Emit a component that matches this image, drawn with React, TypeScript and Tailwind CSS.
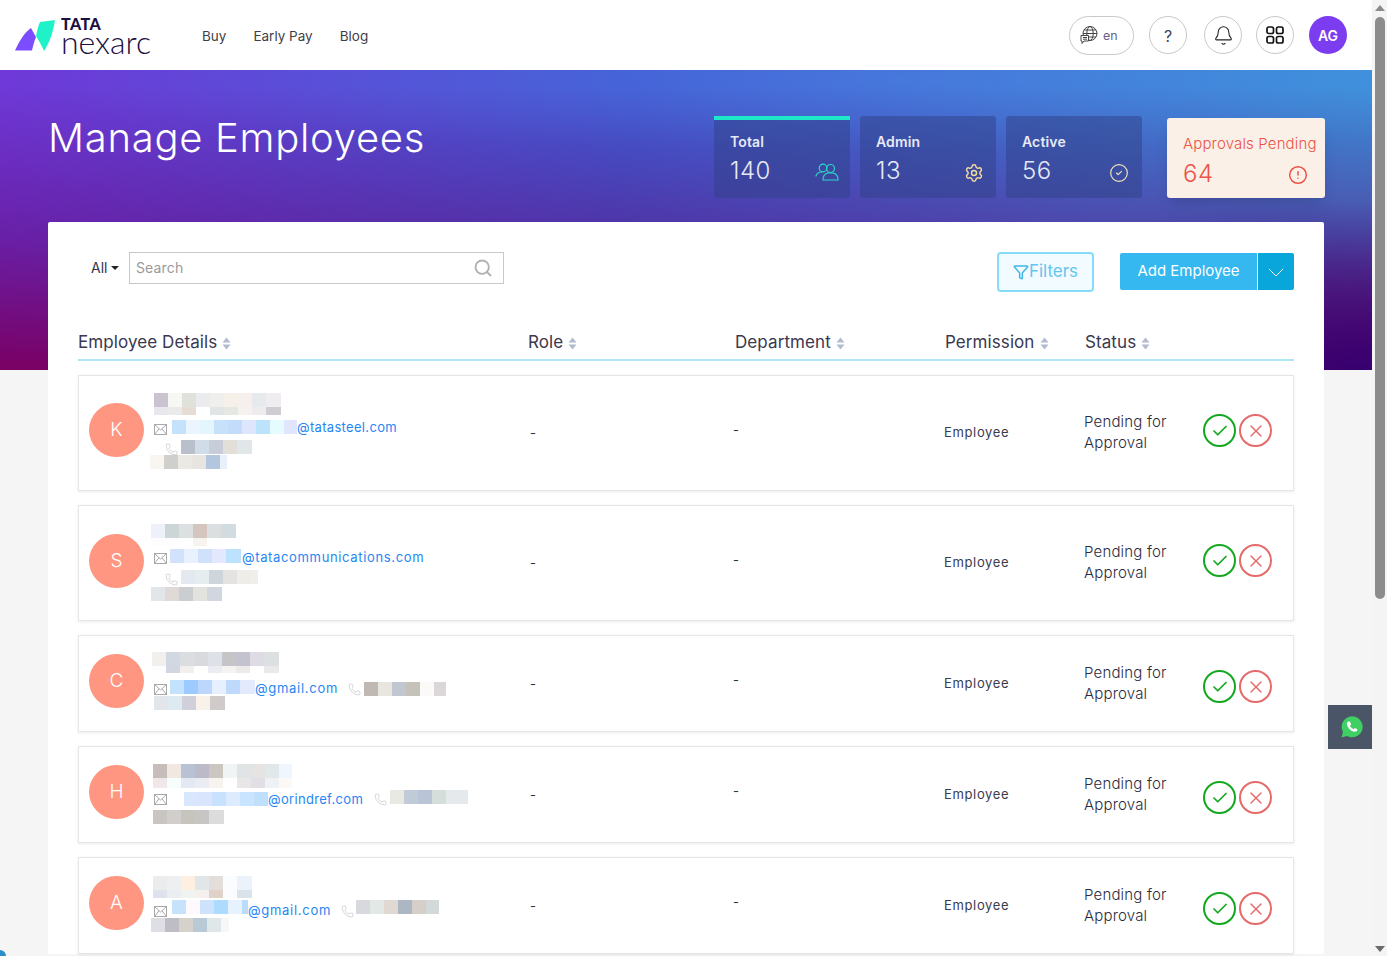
import type { ReactNode } from 'react'
import { Bell, CircleAlert, CircleCheck, Check, Funnel, Phone, Search, Settings, X } from 'lucide-react'

function Mosaic({ cells, className = '' }: { cells: string[]; className?: string }) {
  return (
    <div className={`flex overflow-hidden ${className}`}>
      {cells.map((c, i) => (
        <div key={i} className={`w-[14px] shrink-0 h-full ${c}`} />
      ))}
    </div>
  )
}

function MailIcon({ className = '' }: { className?: string }) {
  return (
    <svg width="13" height="11" viewBox="0 0 13 11" fill="none" stroke="#a9a9a9" strokeWidth="1" className={`shrink-0 ${className}`}>
      <rect x="0.5" y="0.5" width="12" height="10" />
      <path d="M0.5 0.5 6.5 6l6-5.500M0.5 10.500 5 4.800M12.500 10.500 8 4.800" />
    </svg>
  )
}

function PhoneIcon({ className = '' }: { className?: string }) {
  return <Phone size={13} strokeWidth={1} className={`shrink-0 text-[#b5b5b5] ${className}`} />
}

function Domain({ children, className = 'tracking-[0.025em]' }: { children: ReactNode; className?: string }) {
  return <span className={`text-[13px] leading-[14px] text-[#1f86f5] whitespace-nowrap ${className}`}>{children}</span>
}

function SortIcon() {
  return (
    <svg width="9" height="13" viewBox="0 0 9 13" fill="#b3bccf" className="ml-[5px] mt-[2px] shrink-0">
      <path d="M4.500 0.500 8.500 5.500H0.500zM4.500 12.500 0.500 7.500H8.500z" />
    </svg>
  )
}

const employees: { letter: string; height: string; avatar: string; actions: string; details: ReactNode }[] = [
  {
    letter: 'K',
    height: 'h-[116px]',
    avatar: 'mt-[27px]',
    actions: 'mt-[-5px]',
    details: (
      <div className="pt-[17px]">
        <Mosaic className="ml-[4px] w-[127px] h-[14px]" cells={['bg-[#c9c4d0]', 'bg-[#f7f7f3]', 'bg-[#e0e1da]', 'bg-[#eaebec]', 'bg-[#eff0eb]', 'bg-[#f5f1e9]', 'bg-[#f5f0ed]', 'bg-[#e6eaec]', 'bg-[#efedf0]', 'bg-[#efedf0]']} />
        <Mosaic className="ml-[4px] w-[127px] h-[8px]" cells={['bg-[#e8e7ee]', 'bg-[#e9eaea]', 'bg-[#e6dcd3]', 'bg-white', 'bg-[#e0e5e6]', 'bg-[#e6e9e3]', 'bg-[#f5f1ef]', 'bg-[#f0ebec]', 'bg-[#cfcdd2]', 'bg-[#cfcdd2]']} />
        <div className="ml-[4px] mt-[5px] h-[14px] flex items-center">
          <MailIcon className="translate-y-[2px]" />
          <Mosaic className="ml-[5px] w-[125px] h-[14px]" cells={['bg-[#c5e2fd]', 'bg-[#ebf5fe]', 'bg-[#e3f6fe]', 'bg-[#c8e1fb]', 'bg-[#c3dcfb]', 'bg-[#dde6fd]', 'bg-[#bde2fc]', 'bg-[#e6fbfe]', 'bg-[#e0e6fd]']} />
          <Domain>@tatasteel.com</Domain>
        </div>
        <div className="ml-[15px] mt-[6px] h-[14px] flex items-center">
          <PhoneIcon className="translate-y-[2px]" />
          <Mosaic className="ml-[3px] w-[71px] h-[14px]" cells={['bg-[#babfcc]', 'bg-[#d0dde9]', 'bg-[#c8cdd9]', 'bg-[#e2dfd8]', 'bg-[#e1e6e9]', 'bg-[#e1e6e9]']} />
        </div>
        <Mosaic className="mt-px w-[77px] h-[14px]" cells={['bg-[#f9f5f1]', 'bg-[#cfcfce]', 'bg-[#ebe9e3]', 'bg-[#e8e4e0]', 'bg-[#b4c6dd]', 'bg-[#e8f1f9]']} />
      </div>
    ),
  },
  {
    letter: 'S',
    height: 'h-[116px]',
    avatar: 'mt-[28px]',
    actions: 'mt-[-5px]',
    details: (
      <div className="pt-[18px]">
        <Mosaic className="ml-px w-[85px] h-[14px]" cells={['bg-[#eef1f9]', 'bg-[#cdd6d6]', 'bg-[#dde0e1]', 'bg-[#d5c5bf]', 'bg-[#dcdfdf]', 'bg-[#d1dbe0]', 'bg-[#d1dbe0]']} />
        <Mosaic className="ml-px w-[85px] h-[8px]" cells={['bg-[#fdfdfd]', 'bg-[#fdfdfd]', 'bg-white', 'bg-[#f7f4ef]', 'bg-white', 'bg-white', 'bg-white']} />
        <div className="ml-[4px] mt-[3px] h-[14px] flex items-center">
          <MailIcon className="translate-y-[2px]" />
          <Mosaic className="ml-[3px] w-[71px] h-[14px]" cells={['bg-[#d2e2fd]', 'bg-[#e8f1fe]', 'bg-[#d1e1fc]', 'bg-[#e2e8fd]', 'bg-[#bde2fd]', 'bg-[#bde2fd]']} />
          <Domain className="ml-px translate-y-px tracking-[0.05em]">@tatacommunications.com</Domain>
        </div>
        <div className="ml-[15px] mt-[7px] h-[14px] flex items-center">
          <PhoneIcon className="translate-y-[2px]" />
          <Mosaic className="ml-[3px] w-[77px] h-[14px]" cells={['bg-[#e3e9ef]', 'bg-[#e6edee]', 'bg-[#ced6dc]', 'bg-[#e4e3e1]', 'bg-[#eeede8]', 'bg-[#f0efeb]']} />
        </div>
        <Mosaic className="ml-px mt-[3px] w-[71px] h-[14px]" cells={['bg-[#e3e6e8]', 'bg-[#dfdad7]', 'bg-[#cbced1]', 'bg-[#e2e3de]', 'bg-[#d2d6de]', 'bg-[#d2d6de]']} />
      </div>
    ),
  },
  {
    letter: 'C',
    height: 'h-[97px]',
    avatar: 'mt-[18px]',
    actions: 'mt-[6px]',
    details: (
      <div className="pt-[16px]">
        <Mosaic className="ml-[2px] w-[127px] h-[14px]" cells={['bg-[#f1f0ec]', 'bg-[#d2d8e1]', 'bg-[#dcdde1]', 'bg-[#d8dade]', 'bg-[#dfe1e9]', 'bg-[#c5c5c7]', 'bg-[#c2c3ce]', 'bg-[#dedbe5]', 'bg-[#dde0e0]', 'bg-[#dde0e0]']} />
        <Mosaic className="ml-[2px] w-[127px] h-[7px]" cells={['bg-[#fdfdfd]', 'bg-[#d1d6e0]', 'bg-[#f1f0ec]', 'bg-white', 'bg-[#ebecf2]', 'bg-[#f6f4f2]', 'bg-[#eeeaea]', 'bg-white', 'bg-[#e9e9e9]', 'bg-[#e9e9e9]']} />
        <div className="ml-[4px] mt-[7px] h-[14px] flex items-center">
          <MailIcon className="translate-y-[2px]" />
          <Mosaic className="ml-[3px] w-[85px] h-[14px]" cells={['bg-[#c3e2fd]', 'bg-[#9dcbff]', 'bg-[#bdd7fc]', 'bg-[#e6f0fe]', 'bg-[#bed9fc]', 'bg-[#e3eafd]', 'bg-[#e3eafd]']} />
          <Domain className="translate-y-px tracking-[0.055em]">@gmail.com</Domain>
          <PhoneIcon className="ml-[10px] translate-y-[2px]" />
          <Mosaic className="ml-[3px] w-[82px] h-[14px] translate-y-[2px]" cells={['bg-[#c0b9b3]', 'bg-[#e9e6df]', 'bg-[#c1c7d0]', 'bg-[#c5c2b9]', 'bg-[#fcfaf8]', 'bg-[#dbd6d7]']} />
        </div>
        <Mosaic className="ml-[4px] mt-[2px] w-[71px] h-[14px]" cells={['bg-[#e2e5e9]', 'bg-[#deeaf2]', 'bg-[#cfd0da]', 'bg-[#f8f2ea]', 'bg-[#d0cbca]', 'bg-[#d0cbca]']} />
      </div>
    ),
  },
  {
    letter: 'H',
    height: 'h-[97px]',
    avatar: 'mt-[18px]',
    actions: 'mt-[6px]',
    details: (
      <div className="pt-[17px]">
        <Mosaic className="ml-[3px] w-[139px] h-[14px]" cells={['bg-[#c7bebb]', 'bg-[#f1e9e1]', 'bg-[#b9c2d4]', 'bg-[#bcbac9]', 'bg-[#cbc6c1]', 'bg-[#f1f4f4]', 'bg-[#e0e4e4]', 'bg-[#e5e4e2]', 'bg-[#e2e7ea]', 'bg-[#f0f6fd]']} />
        <Mosaic className="ml-[3px] w-[139px] h-[10px]" cells={['bg-[#f0e8e8]', 'bg-[#f6fdfd]', 'bg-[#e3e8f3]', 'bg-[#ebebf4]', 'bg-[#f7f3ef]', 'bg-white', 'bg-[#e9e6e7]', 'bg-[#e2dee6]', 'bg-[#eef2f5]', 'bg-[#fbf8f5]']} />
        <div className="ml-[4px] mt-[4px] h-[14px] flex items-center">
          <MailIcon />
          <Mosaic className="ml-[17px] w-[84px] h-[14px]" cells={['bg-[#d9e7fd]', 'bg-[#d9e4fd]', 'bg-[#c8e1fc]', 'bg-[#dcebfd]', 'bg-[#c8e4fe]', 'bg-[#bfdffd]']} />
          <Domain>@orindref.com</Domain>
          <PhoneIcon className="ml-[11px]" />
          <Mosaic className="ml-[3px] w-[78px] h-[14px] translate-y-[-2px]" cells={['bg-[#e9e9e3]', 'bg-[#c1cad7]', 'bg-[#b9c5d6]', 'bg-[#d5dedb]', 'bg-[#e6e9ec]', 'bg-[#e6e9ec]']} />
        </div>
        <Mosaic className="ml-[3px] mt-[4px] w-[71px] h-[14px]" cells={['bg-[#c9c5c2]', 'bg-[#d0cfcc]', 'bg-[#c7c4bd]', 'bg-[#c8c5c5]', 'bg-[#dcdcdc]', 'bg-[#dcdcdc]']} />
      </div>
    ),
  },
  {
    letter: 'A',
    height: 'h-[97px]',
    avatar: 'mt-[18px]',
    actions: 'mt-[6px]',
    details: (
      <div className="pt-[18px]">
        <Mosaic className="ml-[3px] w-[99px] h-[14px]" cells={['bg-[#ececec]', 'bg-[#eeeff1]', 'bg-[#feefe0]', 'bg-[#e1e6e9]', 'bg-[#e3ded9]', 'bg-[#fafcfd]', 'bg-[#ecf2f9]', 'bg-[#ecf2f9]']} />
        <Mosaic className="ml-[3px] w-[99px] h-[8px]" cells={['bg-[#dfe1ec]', 'bg-[#ebeef0]', 'bg-[#eff4f1]', 'bg-[#f5f0ee]', 'bg-[#e0d1c9]', 'bg-[#fbfcfd]', 'bg-[#dae2ea]', 'bg-[#dae2ea]']} />
        <div className="ml-[4px] mt-[2px] h-[14px] flex items-center">
          <MailIcon className="translate-y-[4px]" />
          <Mosaic className="ml-[5px] w-[76px] h-[14px]" cells={['bg-[#c7e3fc]', 'bg-[#fdf9fe]', 'bg-[#cee2fb]', 'bg-[#acdbfd]', 'bg-[#e6f3fe]', 'bg-[#b9dcfb]']} />
          <Domain className="translate-y-[3px] tracking-[0.055em]">@gmail.com</Domain>
          <PhoneIcon className="ml-[10px] translate-y-[4px]" />
          <Mosaic className="ml-[2px] w-[83px] h-[14px]" cells={['bg-[#d7d9df]', 'bg-[#e1e8e6]', 'bg-[#e0d9d3]', 'bg-[#adb7c3]', 'bg-[#d6cfc9]', 'bg-[#d3d8d8]']} />
        </div>
        <Mosaic className="ml-px mt-[4px] w-[78px] h-[14px]" cells={['bg-[#dddfe4]', 'bg-[#bebcc4]', 'bg-[#d6d1cb]', 'bg-[#bac9d6]', 'bg-[#dfe7e9]', 'bg-[#f7f8f5]']} />
      </div>
    ),
  },
]

function Header() {
  const circle = 'w-[38px] h-[38px] rounded-full border border-[#c9c9c9] flex items-center justify-center'
  return (
    <header className="h-[70px] bg-white flex items-center pl-[15px] pr-[25px]">
      <svg width="41" height="32" viewBox="0 0 41 32" className="shrink-0 mt-[1px]">
        <path d="M0 30.500C5 20 10 12 16 8L21 17C19 22 18 26 17 30.500Z" fill="#7c4dff" />
        <path d="M25 2L40 0C38 12 35 22 29 31C27 26 24 21 21 16C22 11 23 6 25 2Z" fill="#1ff2c8" />
      </svg>
      <div className="ml-[5px] w-[92px] text-[#1d0f3f] font-['Lato',sans-serif]">
        <div className="text-[16px] leading-[12px] font-black tracking-[0.03em]">TATA</div>
        <div className="text-[32px] leading-[23px] font-light">nexarc</div>
      </div>
      <nav className="ml-[49px] pt-[2px] flex gap-[27px] text-[13.5px] text-[#3f3f46]">
        <a>Buy</a>
        <a>Early Pay</a>
        <a>Blog</a>
      </nav>
      <div className="ml-auto flex items-center">
        <div className="w-[65px] h-[39px] rounded-full border border-[#c9c9c9] flex items-center pl-[10px] gap-[5px]">
          <svg width="18" height="19" viewBox="0 0 18 19" fill="none" stroke="#444" strokeWidth="1" className="shrink-0">
            <circle cx="10" cy="7.500" r="7" />
            <ellipse cx="10" cy="7.500" rx="3.200" ry="7" />
            <path d="M3 7.500h14M4 4h12M4 11h12" />
            <path d="M1 9.500h7.500v5.500H4l-2 2.500V15H1z" fill="#fff" />
            <path d="M3 11.500h4M3 13.200h4" />
          </svg>
          <span className="pt-[2px] text-[12.5px] text-[#6a5f88]">en</span>
        </div>
        <div className={`${circle} ml-[15px] pt-[2px] text-[16px] text-[#3a4660]`}>?</div>
        <div className={`${circle} ml-[17px]`}>
          <Bell size={21} strokeWidth={1.2} className="text-[#222]" />
        </div>
        <div className={`${circle} ml-[14px]`}>
          <svg width="18" height="18" viewBox="0 0 18 18" fill="none" stroke="#111" strokeWidth="1.700">
            <rect x="1" y="1" width="6.500" height="6.500" rx="1.800" />
            <rect x="10.500" y="1" width="6.500" height="6.500" rx="1.800" />
            <rect x="1" y="10.500" width="6.500" height="6.500" rx="1.800" />
            <rect x="10.500" y="10.500" width="6.500" height="6.500" rx="1.800" />
          </svg>
        </div>
        <div className="ml-[15px] w-[38px] h-[38px] rounded-full bg-[#7c3cf0] text-white text-[14px] font-semibold flex items-center justify-center">AG</div>
      </div>
    </header>
  )
}

function Stat({ label, value, icon, active }: { label: string; value: string; icon: ReactNode; active?: boolean }) {
  return (
    <div className={`relative w-[136px] h-[82px] bg-[#2f3f86]/50 pl-[16px] text-[#e6e9f6] ${active ? 'rounded-b-[3px] border-t-4 border-[#1de9c9] pt-[12px]' : 'rounded-[3px] pt-[16px]'}`}>
      <div className="text-[14px] leading-[20px] font-semibold tracking-[0.01em]">{label}</div>
      <div className="mt-[4px] text-[24px] leading-[30px] font-light tracking-[0.02em]">{value}</div>
      {icon}
    </div>
  )
}

function Hero() {
  return (
    <section className="h-[300px] flex pl-[48px] pr-[47px] pt-[46px] bg-[radial-gradient(ellipse_900px_70px_at_900px_10px,rgba(130,180,255,0.14),transparent),radial-gradient(ellipse_520px_170px_at_100%_100%,rgba(50,0,112,0.95),transparent),linear-gradient(to_bottom,rgba(98,0,100,0)_5%,rgba(100,0,110,0.45)_55%,rgba(122,0,100,1)_100%),linear-gradient(100deg,#6f38d8_0%,#3f5cd4_45%,#3a92da_100%)]">
      <h1 className="mt-[-3px] text-[40px] leading-[50px] font-light text-white tracking-[0.018em]">Manage Employees</h1>
      <div className="ml-auto flex items-start gap-[10px]">
        <Stat
          label="Total"
          value="140"
          active
          icon={
            <svg width="24" height="18" viewBox="0 0 24 18" fill="none" stroke="#2ad8c4" strokeWidth="1.200" className="absolute right-[11px] bottom-[17px]">
              <circle cx="8" cy="5" r="3.800" />
              <circle cx="15.500" cy="5.500" r="4" />
              <path d="M0.800 13.500C1.500 10.500 4 9 7 9" />
              <path d="M8 17c-.5-3.500 2-6.500 5-7h5c3 .5 5.500 3.500 5 7z" />
            </svg>
          }
        />
        <Stat label="Admin" value="13" icon={<Settings size={20} strokeWidth={1.7} className="absolute right-[12px] bottom-[15px] text-[#f5dca0]" />} />
        <Stat label="Active" value="56" icon={<CircleCheck size={20} strokeWidth={1.4} className="absolute right-[13px] bottom-[15px] text-[#f5e2b8]" />} />
        <div className="relative ml-[15px] mt-[2px] w-[158px] h-[80px] rounded-[3px] bg-[#fbf0e8] pl-[16px] pt-[15px] text-[#ea5347] shadow-lg">
          <div className="text-[15px] leading-[22px] font-light whitespace-nowrap tracking-[0.01em]">Approvals Pending</div>
          <div className="mt-[5px] text-[24px] leading-[28px] font-light tracking-[0.02em]">64</div>
          <CircleAlert size={20} strokeWidth={1.8} className="absolute right-[17px] bottom-[13px]" />
        </div>
      </div>
    </section>
  )
}

function Toolbar() {
  return (
    <div className="h-[40px] flex items-start">
      <div className="ml-[13px] w-[38px] h-[31px] flex items-center text-[14px] text-[#33334a]">
        All
        <span className="ml-[4px] border-x-[4px] border-t-[4px] border-x-transparent border-t-[#222]" />
      </div>
      <div className="w-[375px] h-[32px] border border-[#c8c8c8] flex items-center pl-[6px] pr-[10px] pb-[1px] text-[14px] text-[#9a9a9a] tracking-[0.01em]">
        Search
        <Search size={20} strokeWidth={2.2} className="ml-auto text-[#b0b0b0]" />
      </div>
      <button className="ml-auto w-[97px] h-[40px] rounded-[4px] border-2 border-[#85dcf8] bg-[#f2fbff] flex items-center justify-center text-[17px] text-[#62c6ee]">
        <Funnel size={16} strokeWidth={2.2} className="text-[#3cb6e8]" />
        Filters
      </button>
      <div className="ml-[26px] mt-px h-[37px] flex rounded-[2px] overflow-hidden text-white">
        <div className="w-[137px] bg-[#35b8f0] flex items-center justify-center text-[15px]">Add Employee</div>
        <div className="ml-px w-[36px] bg-[#09a6dc] flex items-center justify-center">
          <svg width="16" height="9" viewBox="0 0 16 9" fill="none" stroke="#fff" strokeWidth="1" className="mt-[2px]">
            <path d="M1 1l7 7 7-7" />
          </svg>
        </div>
      </div>
    </div>
  )
}

function TableHead() {
  const cols = ['Employee Details', 'Role', 'Department', 'Permission', 'Status']
  return (
    <div className="h-[69px] grid grid-cols-[450px_207px_210px_140px_1fr] items-end pb-[5px] border-b-2 border-[#b0e4f7] text-[17px] leading-[24px] text-[#3a3850] tracking-[0.005em]">
      {cols.map(c => (
        <div key={c} className="flex items-center">
          {c}
          <SortIcon />
        </div>
      ))}
    </div>
  )
}

function EmployeeRow({ e }: { e: (typeof employees)[number] }) {
  return (
    <div className={`${e.height} border border-[#e6e6e6] shadow-[0_1px_3px_rgba(0,0,0,0.08)] bg-white grid grid-cols-[452px_203px_210px_140px_119px_1fr] items-center`}>
      <div className="self-start flex">
        <div className={`${e.avatar} ml-[10px] w-[55px] h-[54px] rounded-full bg-[#ff9682] text-white text-[19px] font-light flex items-center justify-center shrink-0`}>{e.letter}</div>
        <div className="ml-[6px] min-w-0">{e.details}</div>
      </div>
      <div className="ml-[-1px] mt-[2px] text-[13px] text-[#333]">-</div>
      <div className="ml-[-1px] mt-[-5px] text-[13px] text-[#333]">-</div>
      <div className="text-[13px] text-[#3b3b4f] tracking-[0.05em]">Employee</div>
      <div className="mt-[-2px] text-[15px] leading-[21px] font-light text-[#2b2b40] tracking-[0.012em]">
        Pending for
        <br />
        Approval
      </div>
      <div className={`${e.actions} flex gap-[3px]`}>
        <button className="w-[33px] h-[33px] rounded-full border-2 border-[#14a81e] flex items-center justify-center text-[#14a81e]">
          <Check size={18} strokeWidth={2.3} />
        </button>
        <button className="w-[33px] h-[33px] rounded-full border-2 border-[#e56a6a] flex items-center justify-center text-[#e56a6a]">
          <X size={20} strokeWidth={1.800} />
        </button>
      </div>
    </div>
  )
}

function Scrollbar() {
  return (
    <div className="w-[15px] h-full shrink-0 bg-[#f4f4f4] flex flex-col items-center">
      <div className="mt-[5px] border-x-[5px] border-b-[6px] border-x-transparent border-b-[#8a8a8a]" />
      <div className="mt-[6px] w-[10px] h-[582px] rounded-full bg-[#8c8c8c]" />
      <div className="mt-auto mb-[4px] border-x-[5px] border-t-[6px] border-x-transparent border-t-[#6a6a6a]" />
    </div>
  )
}

export default function App() {
  return (
    <div className="relative flex h-[956px] overflow-hidden bg-[#f5f5f5] font-['Inter',sans-serif]">
      <div className="relative w-[1372px] shrink-0">
        <Header />
        <Hero />
        <main className="relative mt-[-148px] ml-[48px] w-[1276px] bg-white rounded-t-[2px] px-[30px] pt-[30px]">
          <Toolbar />
          <TableHead />
          <div className="mt-[14px] flex flex-col gap-[14px]">
            {employees.map(e => (
              <EmployeeRow key={e.letter} e={e} />
            ))}
          </div>
        </main>
        <div className="absolute right-0 top-[705px] w-[44px] h-[44px] bg-[#4a5568] flex items-center justify-center">
          <svg width="24" height="24" viewBox="0 0 24 24" className="ml-[3px]">
            <path d="M1.500 22.500 3 17A10.500 10.500 0 1 1 7 21z" fill="#3fcf63" />
            <path d="M8.500 6.500c-1 .2-1.800 1.300-1.600 2.700.3 1.800 1.200 3.500 2.700 5 1.500 1.400 3.200 2.300 5 2.600 1.400.2 2.500-.6 2.700-1.700l.1-.9-2.700-1.300-1.100 1.300c-1.500-.5-3-2-3.600-3.600l1.200-1.100-1.300-2.900z" fill="#fff" />
          </svg>
        </div>
        <div className="absolute left-[-6px] bottom-[-6px] w-[12px] h-[12px] rounded-full bg-[#2a8fc8]" />
      </div>
      <Scrollbar />
    </div>
  )
}
